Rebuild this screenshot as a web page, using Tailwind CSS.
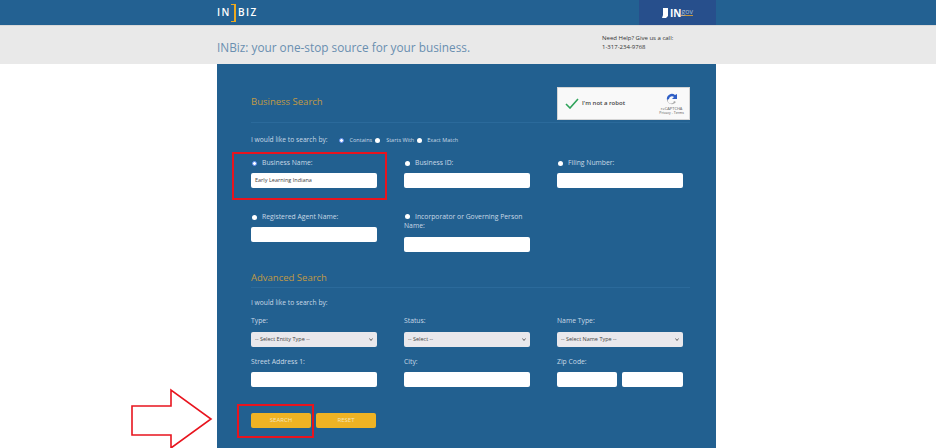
<!DOCTYPE html>
<html>
<head>
<meta charset="utf-8">
<script src="https://cdn.jsdelivr.net/npm/@tailwindcss/browser@4"></script>
</head>
<body class="relative h-[448px] w-[936px] overflow-hidden bg-white font-['Open_Sans',sans-serif]">
<header class="h-[25px] bg-[#236192]">
  <div class="ml-[217px] flex h-full w-[499px] items-center justify-between">
    <div class="flex items-center text-[10px] font-semibold tracking-[1.5px] text-white">
      <span>IN</span>
      <span class="mr-[2px] h-[18px] w-[5px] border-y border-r-2 border-[#eaaa20]"></span>
      <span>BIZ</span>
    </div>
    <div class="flex h-full w-[77px] items-center justify-center gap-[2px] bg-[#274f8c] text-white">
      <svg width="6" height="10" viewBox="0 0 6 10"><path d="M1 0h5v8l-2 2H0l1-3z" fill="#fff"/></svg>
      <span class="text-[10px] font-bold leading-none">IN</span>
      <span class="-ml-[2px] -mt-[2px] border-b border-[#c8963c] text-[7px] leading-[7px] text-[#a9bdd6]">gov</span>
    </div>
  </div>
</header>
<div class="h-[39px] border-t border-[#d9d9d9] bg-[#e9e9e9]">
  <div class="ml-[217px] flex w-[499px]">
    <p class="w-[385px] pt-[11px] text-[11.8px] leading-[20px] text-[#6a8fb0]">INBiz: your one-stop source for your business.</p>
    <p class="pt-[8px] text-[6px] leading-[9px] text-[#333]">Need Help? Give us a call:<br>1-317-234-9768</p>
  </div>
</div>
<main class="ml-[217px] h-[384px] w-[499px] bg-[#226090] pl-[34px] pr-[26px] text-[6.8px] text-[#c9d9e6]">
  <div class="flex h-[59px] items-start justify-between border-b border-[#2b6a9b] pt-[23px]">
    <h2 class="pt-[7px] text-[9.5px] leading-[16px] text-[#c19a45]">Business Search</h2>
    <div class="flex h-[33px] w-[133px] items-center justify-between border border-[#d5d5d5] bg-[#f9f9f9] pl-[7px] pr-[5px]">
      <div class="flex items-center gap-[3px]">
        <svg width="14" height="11" viewBox="0 0 14 11"><path d="M1 6l4 4 8-9" fill="none" stroke="#2fa35a" stroke-width="1.6"/></svg>
        <span class="text-[6px] font-semibold text-[#444]">I'm not a robot</span>
      </div>
      <div class="flex flex-col items-center">
        <svg width="15" height="14" viewBox="0 0 15 14"><path d="M3 8a5 5 0 0 1 8-5l2-1v5H8l2-2a3 3 0 0 0-5 2z" fill="#2f5fc6"/><path d="M3 8a5 5 0 0 0 9 2l-2-1a3 3 0 0 1-6-1z" fill="#a8a8a8"/></svg>
        <span class="text-[4px] leading-[5px] text-[#555]">reCAPTCHA</span>
        <span class="text-[3.5px] leading-[4px] text-[#555]">Privacy - Terms</span>
      </div>
    </div>
  </div>
  <div class="flex h-[17px] items-center pt-[17px] text-[6.7px]">
    <span class="mr-[11px]">I would like to search by:</span>
    <span class="mr-[6px] h-[5px] w-[5px] rounded-full border border-[#5b8cf0] bg-white"></span>
    <span class="mr-[3px] text-[5.5px]">Contains</span>
    <span class="mr-[6px] h-[5px] w-[5px] rounded-full bg-white"></span>
    <span class="mr-[3px] text-[5.5px]">Starts With</span>
    <span class="mr-[5px] h-[5px] w-[5px] rounded-full bg-white"></span>
    <span class="text-[5.5px]">Exact Match</span>
  </div>
  <div class="mt-[6px] grid grid-cols-[126px_126px_126px] gap-x-[27px] pt-[8px]">
    <div>
      <label class="flex h-[19px] items-center gap-[5px]"><span class="ml-[1px] h-[5px] w-[5px] rounded-full border border-[#5b8cf0] bg-white"></span>Business Name:</label>
      <div class="flex h-[15px] items-center rounded-[2px] bg-white pl-[4px] text-[5.5px] text-[#444]">Early Learning Indiana</div>
    </div>
    <div>
      <label class="flex h-[19px] items-center gap-[5px]"><span class="ml-[1px] h-[5px] w-[5px] rounded-full bg-white"></span>Business ID:</label>
      <div class="h-[15px] rounded-[2px] bg-white"></div>
    </div>
    <div>
      <label class="flex h-[19px] items-center gap-[5px]"><span class="ml-[1px] h-[5px] w-[5px] rounded-full bg-white"></span>Filing Number:</label>
      <div class="h-[15px] rounded-[2px] bg-white"></div>
    </div>
  </div>
  <div class="mt-[19px] grid grid-cols-[126px_126px_126px] items-start gap-x-[27px]">
    <div>
      <label class="flex h-[20px] items-center gap-[5px]"><span class="ml-[1px] h-[5px] w-[5px] rounded-full bg-white"></span>Registered Agent Name:</label>
      <div class="h-[15px] rounded-[2px] bg-white"></div>
    </div>
    <div>
      <label class="block h-[30px] pt-[5px] leading-[9px]"><span class="ml-[1px] mr-[5px] inline-block h-[5px] w-[5px] rounded-full bg-white align-[0px]"></span>Incorporator or Governing Person Name:</label>
      <div class="h-[15px] rounded-[2px] bg-white"></div>
    </div>
  </div>
  <div class="mt-[18px] h-[18px] border-b border-[#2b6a9b]">
    <h2 class="text-[9.5px] leading-[16px] text-[#c19a45]">Advanced Search</h2>
  </div>
  <p class="mt-[10px] text-[6.7px] leading-[10px]">I would like to search by:</p>
  <div class="mt-[4px] grid grid-cols-[126px_126px_126px] gap-x-[27px]">
    <div>
      <label class="flex h-[20px] items-center pb-[2px]">Type:</label>
      <div class="flex h-[15px] items-center justify-between rounded-[2px] bg-[#e9e8ec] px-[4px] text-[5.5px] text-[#444]"><span>-- Select Entity Type --</span><svg width="4" height="3" viewBox="0 0 4 3"><path d="M0.5 0.5l1.5 2 1.5-2" fill="none" stroke="#444" stroke-width="0.8"/></svg></div>
    </div>
    <div>
      <label class="flex h-[20px] items-center pb-[2px]">Status:</label>
      <div class="flex h-[15px] items-center justify-between rounded-[2px] bg-[#e9e8ec] px-[4px] text-[5.5px] text-[#444]"><span>-- Select --</span><svg width="4" height="3" viewBox="0 0 4 3"><path d="M0.5 0.5l1.5 2 1.5-2" fill="none" stroke="#444" stroke-width="0.8"/></svg></div>
    </div>
    <div>
      <label class="flex h-[20px] items-center pb-[2px]">Name Type:</label>
      <div class="flex h-[15px] items-center justify-between rounded-[2px] bg-[#e9e8ec] px-[4px] text-[5.5px] text-[#444]"><span>-- Select Name Type --</span><svg width="4" height="3" viewBox="0 0 4 3"><path d="M0.5 0.5l1.5 2 1.5-2" fill="none" stroke="#444" stroke-width="0.8"/></svg></div>
    </div>
  </div>
  <div class="mt-[5px] grid grid-cols-[126px_126px_126px] gap-x-[27px]">
    <div>
      <label class="flex h-[20px] items-center">Street Address 1:</label>
      <div class="h-[15px] rounded-[2px] bg-white"></div>
    </div>
    <div>
      <label class="flex h-[20px] items-center">City:</label>
      <div class="h-[15px] rounded-[2px] bg-white"></div>
    </div>
    <div>
      <label class="flex h-[20px] items-center">Zip Code:</label>
      <div class="flex gap-[5px]">
        <div class="h-[15px] w-[60px] rounded-[2px] bg-white"></div>
        <div class="h-[15px] w-[61px] rounded-[2px] bg-white"></div>
      </div>
    </div>
  </div>
  <div class="mt-[26px] flex gap-[5px]">
    <button class="h-[15px] w-[60px] rounded-[2px] bg-[#efb324] text-[6px] text-[#f6e6bd]">SEARCH</button>
    <button class="h-[15px] w-[60px] rounded-[2px] bg-[#efb324] text-[6px] text-[#f6e6bd]">RESET</button>
  </div>
</main>
<div class="absolute left-[232px] top-[152px] h-[48px] w-[155px] border-2 border-[#e8141e]"></div>
<div class="absolute left-[237px] top-[404px] h-[34px] w-[77px] border-2 border-[#e8141e]"></div>
<svg class="absolute left-[130px] top-[388px]" width="84" height="60" viewBox="0 0 84 60"><path d="M2 18H41V2L81 31L41 60V47H2Z" fill="#fff" stroke="#e8141e" stroke-width="1.6"/></svg>
</body>
</html>
